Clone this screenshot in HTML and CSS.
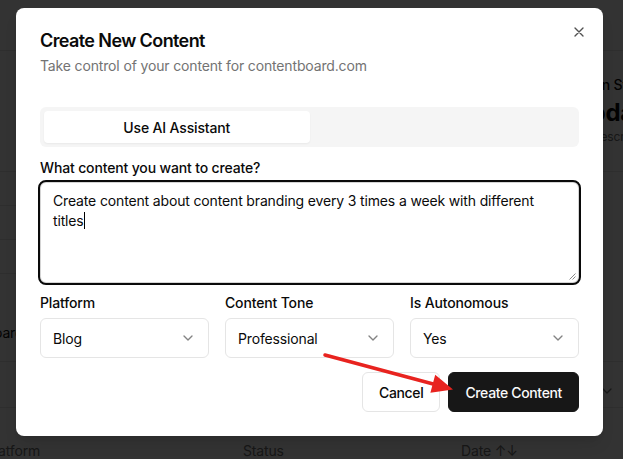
FILE: index.html
```html
<!DOCTYPE html>
<html lang="en">
<head>
<meta charset="utf-8">
<title>Create New Content</title>
<link rel="stylesheet" href="styles.css">
</head>
<body>
<div class="page">
  <header class="topbar"></header>
  <section class="stats">
    <div class="stat">
      <div class="stat-title">ion Stats</div>
      <div class="stat-value">Update</div>
      <div class="stat-caption">Description</div>
    </div>
  </section>
  <div class="row short"></div>
  <div class="row short"></div>
  <div class="row short"></div>
  <div class="row tall"><span class="cut-left">oard</span></div>
  <div class="row mid"><svg class="bg-chevron" viewBox="0 0 24 24" width="16" height="16"><path d="m6 9 6 6 6-6" fill="none" stroke="#000" stroke-width="2" stroke-linecap="round" stroke-linejoin="round"/></svg></div>
  <div class="thead">
    <span class="th th-platform">Platform</span>
    <span class="th th-status">Status</span>
    <span class="th th-date">Date ↑↓</span>
  </div>
</div>

<div class="overlay"></div>

<div class="dialog">
  <button class="close" aria-label="Close">
    <svg viewBox="0 0 24 24" width="16" height="16"><path d="M18 6 6 18M6 6l12 12" fill="none" stroke="currentColor" stroke-width="2" stroke-linecap="round" stroke-linejoin="round"/></svg>
  </button>
  <div class="dialog-header">
    <h2 class="title">Create New Content</h2>
    <p class="desc">Take control of your content for contentboard.com</p>
  </div>

  <div class="tabs">
    <div class="tab active">Use AI Assistant</div>
    <div class="tab"></div>
  </div>

  <label class="label prompt-label">What content you want to create?</label>
  <div class="textarea">Create content about content branding every 3 times a week with different titles<span class="caret"></span>
    <svg class="grip" viewBox="0 0 8 8" width="8" height="8"><path d="M7.5 1.5 1.5 7.5M7.5 4.5 4.5 7.5" stroke="#8a8a8a" stroke-width="1" fill="none"/></svg>
  </div>

  <div class="fields">
    <div class="field">
      <label class="label">Platform</label>
      <div class="select"><span>Blog</span><svg viewBox="0 0 24 24" width="16" height="16"><path d="m6 9 6 6 6-6" fill="none" stroke="currentColor" stroke-width="2" stroke-linecap="round" stroke-linejoin="round"/></svg></div>
    </div>
    <div class="field">
      <label class="label">Content Tone</label>
      <div class="select"><span>Professional</span><svg viewBox="0 0 24 24" width="16" height="16"><path d="m6 9 6 6 6-6" fill="none" stroke="currentColor" stroke-width="2" stroke-linecap="round" stroke-linejoin="round"/></svg></div>
    </div>
    <div class="field">
      <label class="label">Is Autonomous</label>
      <div class="select"><span>Yes</span><svg viewBox="0 0 24 24" width="16" height="16"><path d="m6 9 6 6 6-6" fill="none" stroke="currentColor" stroke-width="2" stroke-linecap="round" stroke-linejoin="round"/></svg></div>
    </div>
  </div>

  <div class="footer">
    <button class="btn btn-outline">Cancel</button>
    <button class="btn btn-primary">Create Content</button>
  </div>
</div>

<svg class="annotation" viewBox="0 0 623 459" width="623" height="459">
  <line x1="325" y1="355" x2="436" y2="384.8" stroke="#e8231f" stroke-width="3.5" stroke-linecap="round"/>
  <polygon points="453,389.5 430.4,392.8 435.2,374.8" fill="#e8231f"/>
</svg>
</body>
</html>
```

FILE: styles.css
```css
* { box-sizing: border-box; }
html, body { margin: 0; padding: 0; }
body {
  width: 623px;
  height: 459px;
  overflow: hidden;
  font-family: Inter, "Noto Sans", "Liberation Sans", sans-serif;
  letter-spacing: -0.15px;
  color: #0a0a0a;
  background: #fff;
  position: relative;
}

/* background page */
.page { width: 623px; height: 459px; overflow: hidden; background: #fff; }
.topbar { height: 51px; border-bottom: 1px solid #e5e5e5; }
.stats { height: 121px; border-bottom: 1px solid #e5e5e5; display: flex; }
.stat { margin-left: 590px; padding-top: 24px; white-space: nowrap; }
.stat-title { font-size: 14px; font-weight: 500; line-height: 20px; }
.stat-value { font-size: 24px; font-weight: 700; line-height: 32px; margin-left: -17px; margin-top: 2px; }
.stat-caption { font-size: 12px; color: #737373; line-height: 16px; margin-left: 2px; }
.row { border-bottom: 1px solid #e5e5e5; display: flex; align-items: center; }
.row.short { height: 34px; width: 300px; }
.row.short:last-of-type { width: 623px; }
.row.tall { height: 88px; width: 623px; font-size: 14px; padding-top: 50px; align-items: flex-start; }
.row.mid { height: 46px; width: 623px; justify-content: flex-end; padding-right: 8px; padding-top: 12px; }
.cut-left { margin-left: -6px; color: #111; }
.bg-chevron { opacity: .5; }
.thead { display: flex; height: 51px; align-items: center; font-size: 14px; color: #737373; padding-top: 33px; }
.th-platform { margin-left: -14px; width: 257px; }
.th-status { width: 218px; }

.overlay { position: absolute; inset: 0; background: rgba(0, 0, 0, 0.8); }

/* dialog */
.dialog {
  position: absolute;
  left: 16px;
  top: 8px;
  width: 587px;
  height: 428px;
  background: #fff;
  border-radius: 8px;
  padding: 24px;
  box-shadow: 0 10px 15px -3px rgba(0,0,0,.1), 0 4px 6px -4px rgba(0,0,0,.1);
}
.close {
  position: absolute;
  right: 16px;
  top: 16px;
  width: 16px;
  height: 16px;
  padding: 0;
  border: 0;
  background: none;
  color: #0a0a0a;
  opacity: .7;
  display: flex;
}
.dialog-header { display: flex; flex-direction: column; }
.title { margin: 0; font-size: 18px; font-weight: 600; line-height: 18px; letter-spacing: -0.6px; }
.desc { margin: 6px 0 0; font-size: 14px; line-height: 20px; color: #737373; }

.tabs {
  margin-top: 31px;
  height: 40px;
  padding: 4px;
  background: #f5f5f5;
  border-radius: 6px;
  display: grid;
  grid-template-columns: 1fr 1fr;
}
.tab {
  display: flex;
  align-items: center;
  justify-content: center;
  font-size: 14px;
  font-weight: 500;
  color: #0a0a0a;
  border-radius: 4px;
}
.tab.active { background: #fff; box-shadow: 0 1px 2px rgba(0,0,0,.05); }

.label { display: block; font-size: 14px; font-weight: 500; line-height: 20px; }
.prompt-label { margin-top: 11px; }

.textarea {
  position: relative;
  margin-top: 4px;
  height: 101px;
  border: 1px solid #d4d4d4;
  border-radius: 6px;
  outline: 2px solid #0a0a0a;
  outline-offset: 0;
  padding: 8px 12px;
  font-size: 14px;
  line-height: 20px;
  color: #0a0a0a;
}
.caret { display: inline-block; width: 1px; height: 17px; background: #000; vertical-align: -3px; }
.grip { position: absolute; right: 2px; bottom: 2px; }

.fields {
  margin-top: 10px;
  display: grid;
  grid-template-columns: repeat(3, 1fr);
  gap: 16px;
}
.field .select { margin-top: 5px; }
.select {
  height: 40px;
  border: 1px solid #e5e5e5;
  border-radius: 6px;
  padding: 0 12px;
  display: flex;
  align-items: center;
  justify-content: space-between;
  font-size: 14px;
  color: #0a0a0a;
}
.select svg { opacity: .5; }

.footer { margin-top: 14px; display: flex; justify-content: flex-end; gap: 8px; }
.btn {
  height: 40px;
  padding: 0 16px;
  border-radius: 6px;
  font-family: inherit;
  font-size: 14px;
  font-weight: 500;
  letter-spacing: -0.35px;
  cursor: pointer;
}
.btn-outline { background: #fff; border: 1px solid #e5e5e5; color: #0a0a0a; }
.btn-primary { background: #171717; border: 1px solid #171717; color: #fafafa; }

.annotation { position: absolute; left: 0; top: 0; pointer-events: none; }
```
